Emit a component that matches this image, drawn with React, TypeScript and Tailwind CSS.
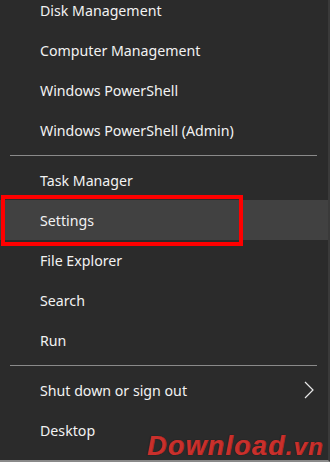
import React from "react";

const groups = [
  ["Disk Management", "Computer Management", "Windows PowerShell", "Windows PowerShell (Admin)"],
  ["Task Manager", "Settings", "File Explorer", "Search", "Run"],
  ["Shut down or sign out", "Desktop"],
];

function Row({ label }: { label: string }) {
  const hovered = label === "Settings";
  const arrow = label === "Shut down or sign out";
  return (
    <div
      className={
        "relative flex h-[40px] items-center pl-[40px] pr-[12px] text-[14.2px] text-[#f2f2f2] " +
        (hovered ? "bg-[#414141]" : "")
      }
    >
      <span className="flex-1 pt-[1px]">{label}</span>
      {arrow && (
        <svg width="10" height="18" viewBox="0 0 10 18" className="mr-[2px]">
          <polyline points="1,1 9,9 1,17" fill="none" stroke="#e8e8e8" strokeWidth="1.2" />
        </svg>
      )}
      {hovered && (
        <div className="absolute left-[1px] top-[-5px] h-[51px] w-[242px] border-[4px] border-[#ff0000]" />
      )}
    </div>
  );
}

export default function App() {
  return (
    <div
      className="relative h-[462px] w-[330px] overflow-hidden border-r-[2px] border-b-[2px] border-r-[#3a3a3a] border-b-[#8a8a8a] bg-[#2b2b2b]"
      style={{ fontFamily: '"Noto Sans", "Open Sans", sans-serif' }}
    >
      <div className="mt-[-10px] w-[328px]">
        {groups.map((g, i) => (
          <div key={i}>
            {i > 0 && (
              <div className="flex h-[10px] items-center px-[10px]">
                <div className="h-[1px] w-[307px] bg-[#8a8a8a]" />
              </div>
            )}
            {g.map((l) => (
              <Row key={l} label={l} />
            ))}
          </div>
        ))}
      </div>
      <div
        className="absolute left-[147px] top-[433px] text-[27px] font-bold italic leading-none tracking-[1.2px] text-[#c9302c]"
        style={{ fontFamily: '"Liberation Sans", Arial, sans-serif', textShadow: "0 0 1px #111, 0.5px 0 0 #c9302c" }}
      >
        Download<span className="text-[24px]">.vn</span>
      </div>
    </div>
  );
}
